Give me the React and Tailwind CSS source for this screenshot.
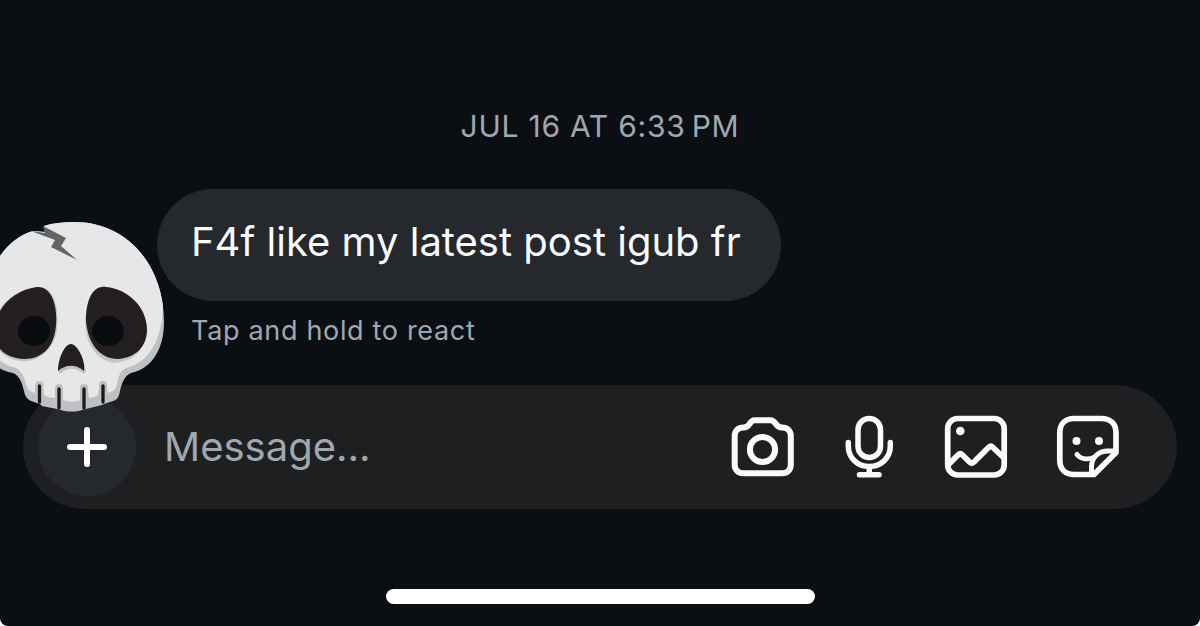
function Skull() {
  return (
    <svg
      viewBox="0 215 170 200"
      className="pointer-events-none absolute top-[26px] left-0 z-10 h-[200px] w-[170px]"
      role="img"
      aria-label="Skull"
    >
      <path
        fill="#bfc0c2"
        d="M74 222C128 222 164 266 164 322C164 350 151 369 131 373C124 376 122 383 120 391C119 397 117 400 113 401L104 404L102 405L86 409L82 410C76 412 67 412 61 410L57 409L42 406L40 404L31 401C27 399 25 396 24 391C22 383 20 376 13 373C-8 370 -22 350 -22 322C-22 290 0 240 33 231L45 232L44 226C53 223 63 222 74 222Z"
      />
      <path
        fill="#e6e7e8"
        d="M74 222C124 222 157 259 163 306C162 345 145 363 129 367C121 369 118 376 117 384C116 390 112 392 108 393L106 382H100L98 395C95 397 92 398 89 398L87 386H81L80 400C75 402 68 402 63 400L62 386H56L55 398C51 398 47 397 44 395L42 382H36L35 393C29 391 27 389 26 384C24 376 21 369 13 367C-4 363 -18 345 -20 306C-14 270 6 238 33 231L45 232L44 226C53 223 63 222 74 222Z"
      />
      <path fill="#636466" d="M31 231L45 233L43 226L66 238L61 246L77 260L51 247L55 240Z" />
      <path fill="#c3c4c6" d="M37 287C57 285 60 316 56 335C50 355 32 365 15 360C-24 350 -8 291 37 287Z" />
      <path fill="#c3c4c6" d="M107 287C90 284 83 310 86 332C89 348 99 361 114 363C158 360 155 305 107 287Z" />
      <path fill="#231f20" d="M37 287C59 286 60 328 51 344C43 358 28 361 16 358C-22 350 -8 293 37 287Z" />
      <path fill="#231f20" d="M106 287C92 285 86 301 86 321C88 344 100 359 118 359C136 358 147 346 147 330C147 307 128 289 106 287Z" />
      <ellipse cx="34" cy="331" rx="16" ry="15" fill="#090c0f" />
      <ellipse cx="108" cy="331" rx="16" ry="15" fill="#090c0f" />
      <path fill="#bfc0c2" d="M58 371L60 374C67 367 76 367 84 374L86 371L84 362H60Z" />
      <path fill="#231f20" d="M71 344C64 344 58 360 58 371C64 365 76 363 84 371C86 360 77 344 71 344Z" />
      <path fill="none" strokeLinecap="round" stroke="#bfc0c2" strokeWidth="8" d="M39.500 385V397M59 388V402M84 388V402M103 385V397" />
      <path fill="none" strokeLinecap="round" stroke="#191a1c" strokeWidth="3.300" d="M39.500 386V402M59 389V408M84 389V408M103 386V402" />
    </svg>
  );
}

function CameraIcon() {
  return (
    <svg viewBox="728 415 72 64" className="h-16 w-18" fill="none" stroke="currentColor" strokeWidth="6" strokeLinejoin="round">
      <path d="M754.500 420.200H770.500C776 420.200 775 427.500 782 427.500C787.500 427.500 790.800 431 790.800 436V464.500C790.800 470 787.500 473.300 782 473.300H743.500C738 473.300 734.700 470 734.700 464.500V436C734.700 431 738 427.500 743.500 427.500C750.500 427.500 749 420.200 754.500 420.200Z" />
      <circle cx="762.500" cy="449.500" r="12.600" />
    </svg>
  );
}

function MicIcon() {
  return (
    <svg viewBox="836 415 72 64" className="h-16 w-18" fill="none" stroke="currentColor" strokeWidth="5.500" strokeLinecap="round">
      <rect x="858" y="418.500" width="22.500" height="39" rx="11.250" />
      <path d="M848.300 442.500V446C848.300 458 857.500 466.500 869.300 466.500S890.300 458 890.300 446V442.500M869.300 467V474M859.500 474.800H879" />
    </svg>
  );
}

function PhotoIcon() {
  return (
    <svg viewBox="944 415 72 64" className="h-16 w-18" fill="none" stroke="currentColor" strokeWidth="5.700" strokeLinejoin="round">
      <rect x="947.700" y="418.500" width="56.500" height="56.500" rx="10" />
      <path d="M948 465L958 455C959.500 453.500 961 453.500 962.500 455L969.500 462C971 463.500 972.500 463.500 974 462L988.500 447.500C990 446 991.500 446 993 447.500L1004 458" />
      <circle cx="960.300" cy="431" r="4.300" fill="currentColor" stroke="none" />
    </svg>
  );
}

function StickerIcon() {
  return (
    <svg viewBox="1052 415 72 64" className="h-16 w-18" fill="none" stroke="currentColor" strokeWidth="5.700" strokeLinecap="round" strokeLinejoin="round">
      <path d="M1094 474.500H1074C1065 474.500 1059.800 469 1059.800 460V433C1059.800 424 1065 418.500 1074 418.500H1101.500C1110.500 418.500 1116 424 1116 433V452.500Z" />
      <path strokeWidth="5" d="M1091.500 473.500V467C1091.500 456 1100 451 1108 451H1115" />
      <path strokeWidth="5" d="M1077 454.500C1080.500 458.800 1087 460 1094 457.500" />
      <g fill="currentColor" stroke="none">
        <circle cx="1076.500" cy="441" r="4" />
        <circle cx="1099" cy="441" r="4" />
      </g>
    </svg>
  );
}

const actions = [
  { label: "Camera", Icon: CameraIcon },
  { label: "Voice message", Icon: MicIcon },
  { label: "Photo library", Icon: PhotoIcon },
  { label: "Stickers", Icon: StickerIcon },
];

export default function App() {
  return (
    <div className="min-h-screen bg-white font-['Inter',sans-serif]">
      <main className="flex min-h-screen flex-col overflow-hidden rounded-b-lg bg-[#0b0f14] pt-[106px]">
        <time className="text-center text-[30px] leading-10 tracking-wide text-[#a1a7b0]">{"JUL 16 AT 6:33\u202fPM"}</time>

        <section className="relative mt-[43px] flex flex-col items-start pl-[157px]">
          <Skull />
          <p className="rounded-[56px] bg-[#25282d] pt-[29px] pr-10 pb-[35px] pl-[34px] text-[40px] leading-[48px] text-[#f8fafc]">
            F4f like my latest post igub fr
          </p>
          <p className="mt-3 pl-[34px] text-[27px] leading-9 tracking-wide text-[#a1a7b0]">Tap and hold to react</p>
        </section>

        <form
          className="mx-[23px] mt-9 flex items-center rounded-full bg-[#1e1f21] py-[13px] pr-[53px] pl-[15px]"
          onSubmit={(e) => e.preventDefault()}
        >
          <button type="button" aria-label="Add" className="flex size-[98px] shrink-0 items-center justify-center rounded-full bg-[#25282d] text-white">
            <svg viewBox="0 0 40 40" className="size-10" fill="none" stroke="currentColor" strokeWidth="6" strokeLinecap="round">
              <path d="M20 3V37M3 20H37" />
            </svg>
          </button>
          <input
            type="text"
            aria-label="Message"
            placeholder="Message..."
            className="ml-7 min-w-0 flex-1 bg-transparent text-[40px] leading-[48px] text-[#f8fafc] outline-none placeholder:text-[#a1a7b0]"
          />
          <div className="flex shrink-0 gap-9 text-[#f8fafc]">
            {actions.map(({ label, Icon }) => (
              <button key={label} type="button" aria-label={label}>
                <Icon />
              </button>
            ))}
          </div>
        </form>

        <div className="mx-auto mt-auto mb-[22px] h-[15px] w-[429px] rounded-full bg-white" />
      </main>
    </div>
  );
}
